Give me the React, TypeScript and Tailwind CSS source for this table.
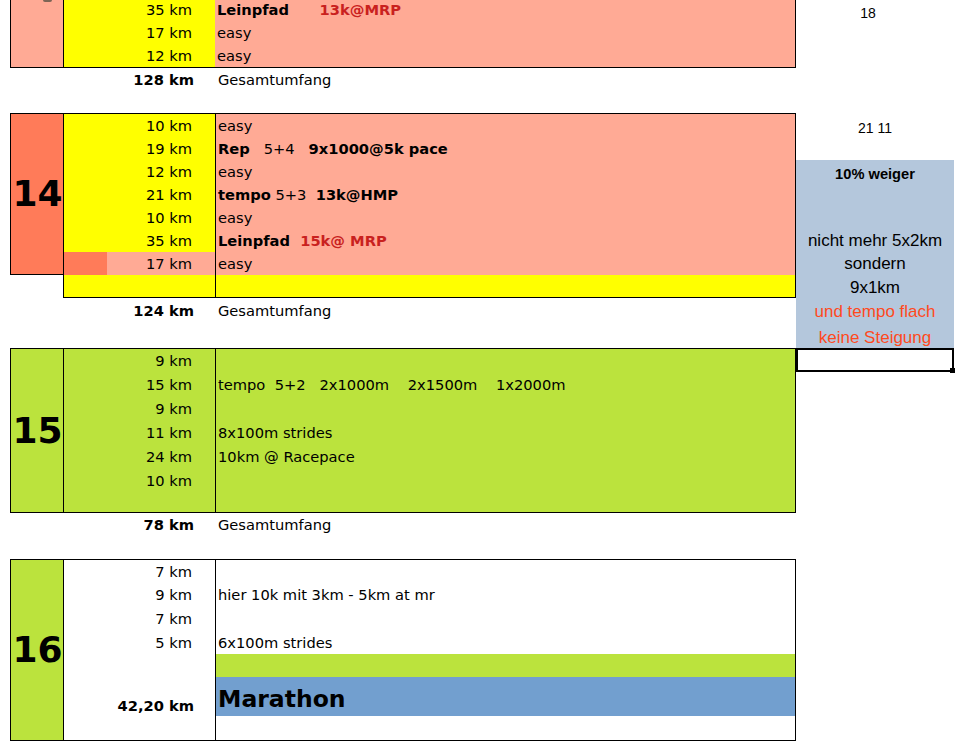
import React from "react";

type RowProps = {
  h: string;
  b: string;
  c: string;
  km?: React.ReactNode;
  children?: React.ReactNode;
  line?: boolean;
  kmBold?: boolean;
};

function Row({ h, b, c, km, children, line = true, kmBold = false }: RowProps) {
  return (
    <div className={`flex ${h}`}>
      <div
        className={`w-[151px] shrink-0 flex items-center justify-end ${kmBold ? "pr-[21px] font-bold" : "pr-[23px]"} ${b}`}
      >
        {km}
      </div>
      <div
        className={`flex-1 flex items-center pl-[2px] whitespace-pre ${line ? "border-l border-black" : ""} ${c}`}
      >
        {children}
      </div>
    </div>
  );
}

function SumRow({ h, km }: { h: string; km: string }) {
  return (
    <div className={`flex ${h} ml-[64px]`}>
      <div className="w-[151px] shrink-0 flex items-center justify-end pr-[21px] font-bold">{km}</div>
      <div className="flex-1 flex items-center pl-[3px]">Gesamtumfang</div>
    </div>
  );
}

export default function App() {
  return (
    <div className="w-[963px] h-[746px] overflow-hidden bg-white flex font-['DejaVu_Sans',sans-serif] text-[14.67px] text-black">
      {/* left: table */}
      <div className="w-[796px] shrink-0 flex flex-col">
        {/* week 13 (partial) */}
        <div className="-mt-[2px] ml-[10px] w-[786px] flex border-l border-r border-b border-black">
          <div className="relative w-[53px] shrink-0 bg-[#ffaa95] border-r border-black">
            <div className="absolute left-[32px] top-[2px] w-[9px] h-[2px] rounded-b-full bg-[#7d6556]" />
          </div>
          <div className="flex-1 flex flex-col">
            <Row h="h-[23px]" b="bg-[#ffff00]" c="bg-[#ffaa95]" km="35 km" line={false}>
              <span className="font-bold">{"Leinpfad      "}</span>
              <span className="font-bold text-[#c9211e]">13k@MRP</span>
            </Row>
            <Row h="h-[23px]" b="bg-[#ffff00]" c="bg-[#ffaa95]" km="17 km" line={false}>
              easy
            </Row>
            <Row h="h-[23px]" b="bg-[#ffff00]" c="bg-[#ffaa95]" km="12 km" line={false}>
              easy
            </Row>
          </div>
        </div>
        <SumRow h="h-[23px]" km="128 km" />
        <div className="h-[22px]" />

        {/* week 14 */}
        <div className="ml-[10px] flex items-start">
          <div className="w-[53px] h-[162px] shrink-0 bg-[#ff7b59] border-l border-t border-b border-black flex items-center justify-center">
            <span className="text-[36px] font-bold leading-none pl-[1px]">14</span>
          </div>
          <div className="w-[733px] border border-black flex flex-col">
            <Row h="h-[23px]" b="bg-[#ffff00]" c="bg-[#ffaa95]" km="10 km">easy</Row>
            <Row h="h-[23px]" b="bg-[#ffff00]" c="bg-[#ffaa95]" km="19 km">
              <span className="font-bold">Rep</span>
              <span>{"   5+4   "}</span>
              <span className="font-bold">9x1000@5k pace</span>
            </Row>
            <Row h="h-[23px]" b="bg-[#ffff00]" c="bg-[#ffaa95]" km="12 km">easy</Row>
            <Row h="h-[23px]" b="bg-[#ffff00]" c="bg-[#ffaa95]" km="21 km">
              <span className="font-bold">tempo</span>
              <span>{" 5+3  "}</span>
              <span className="font-bold">13k@HMP</span>
            </Row>
            <Row h="h-[23px]" b="bg-[#ffff00]" c="bg-[#ffaa95]" km="10 km">easy</Row>
            <Row h="h-[23px]" b="bg-[#ffff00]" c="bg-[#ffaa95]" km="35 km">
              <span className="font-bold">{"Leinpfad  "}</span>
              <span className="font-bold text-[#c9211e]">15k@ MRP</span>
            </Row>
            <div className="flex h-[23px]">
              <div className="w-[43px] shrink-0 bg-[#ff7b59]" />
              <div className="w-[108px] shrink-0 bg-[#ffaa95] flex items-center justify-end pr-[23px]">17 km</div>
              <div className="flex-1 flex items-center pl-[2px] border-l border-black bg-[#ffaa95]">easy</div>
            </div>
            <Row h="h-[22px]" b="bg-[#ffff00]" c="bg-[#ffff00]" />
          </div>
        </div>
        <SumRow h="h-[25px]" km="124 km" />
        <div className="h-[25px]" />

        {/* week 15 */}
        <div className="ml-[10px] w-[786px] h-[165px] flex border border-black bg-[#bbe33d]">
          <div className="w-[53px] shrink-0 border-r border-black flex items-center justify-center">
            <span className="text-[36px] font-bold leading-none pl-[1px]">15</span>
          </div>
          <div className="flex-1 flex flex-col">
            <Row h="h-[24px]" b="" c="" km="9 km" />
            <Row h="h-[24px]" b="" c="" km="15 km">
              {"tempo  5+2   2x1000m    2x1500m    1x2000m"}
            </Row>
            <Row h="h-[24px]" b="" c="" km="9 km" />
            <Row h="h-[24px]" b="" c="" km="11 km">8x100m strides</Row>
            <Row h="h-[24px]" b="" c="" km="24 km">10km @ Racepace</Row>
            <Row h="h-[24px]" b="" c="" km="10 km" />
            <Row h="flex-1" b="" c="" />
          </div>
        </div>
        <SumRow h="h-[23px]" km="78 km" />
        <div className="h-[23px]" />

        {/* week 16 */}
        <div className="ml-[10px] w-[786px] h-[182px] flex border border-black bg-white">
          <div className="w-[53px] shrink-0 border-r border-black bg-[#bbe33d] flex items-center justify-center">
            <span className="text-[36px] font-bold leading-none pl-[1px]">16</span>
          </div>
          <div className="flex-1 flex flex-col">
            <Row h="h-[23px]" b="" c="" km="7 km" />
            <Row h="h-[24px]" b="" c="" km="9 km">hier 10k mit 3km - 5km at mr</Row>
            <Row h="h-[24px]" b="" c="" km="7 km" />
            <Row h="h-[23px]" b="" c="" km="5 km">6x100m strides</Row>
            <Row h="h-[23px]" b="" c="bg-[#bbe33d]" />
            <div className="flex h-[39px]">
              <div className="w-[151px] shrink-0 flex items-end justify-end pr-[21px] font-bold leading-[23px] -mb-[1px]">
                42,20 km
              </div>
              <div className="flex-1 flex items-center pl-[2px] pt-[7px] border-l border-black bg-[#729fcf]">
                <span className="text-[23.5px] font-bold leading-none">Marathon</span>
              </div>
            </div>
            <Row h="flex-1" b="" c="" />
          </div>
        </div>
      </div>

      {/* right: notes */}
      <div className="w-[158px] shrink-0 flex flex-col font-['Liberation_Sans',Arial,sans-serif]">
        <div className="h-[26px] flex items-center justify-center pr-[14px] text-[14px]">18</div>
        <div className="h-[90px]" />
        <div className="h-[24px] flex items-center justify-center text-[14px]">21 11</div>
        <div className="h-[20px]" />
        <div className="h-[188px] bg-[#b4c7dc] flex flex-col items-center text-[17px]">
          <div className="h-[28px] flex items-center font-bold text-[14.67px]">10% weiger</div>
          <div className="h-[41px]" />
          <div className="h-[23px] flex items-center">nicht mehr 5x2km</div>
          <div className="h-[24px] flex items-center">sondern</div>
          <div className="h-[24px] flex items-center">9x1km</div>
          <div className="h-[24px] flex items-center text-[#ff4a1c]">und tempo flach</div>
          <div className="h-[24px] flex items-center pt-[3px] text-[#ff4a1c]">keine Steigung</div>
        </div>
        <div className="relative h-[24px] border-2 border-black">
          <div className="absolute -right-[3px] -bottom-[3px] w-[5px] h-[5px] bg-black" />
        </div>
      </div>
    </div>
  );
}
